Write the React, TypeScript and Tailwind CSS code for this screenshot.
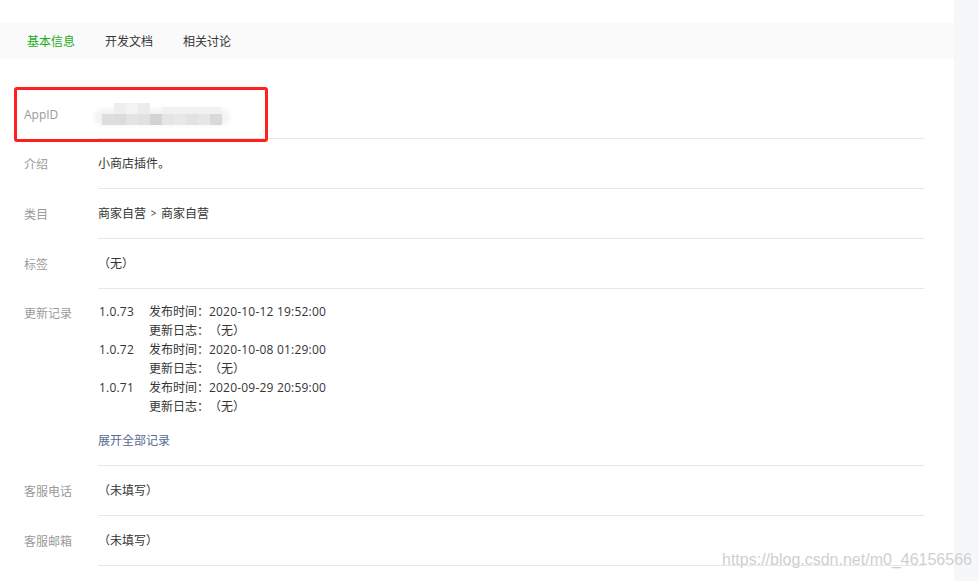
const FONT = "font-['Open_Sans','Noto_Sans_CJK_SC',sans-serif]";

const records = [
  { v: '1.0.73', t: '2020-10-12 19:52:00' },
  { v: '1.0.72', t: '2020-10-08 01:29:00' },
  { v: '1.0.71', t: '2020-09-29 20:59:00' },
];

function Mosaic() {
  // pixelated AppID value
  const bottom = ['#dedede', '#dcdcdc', '#e4e4e4', '#e1e1e1', '#d3d3d3', '#e5e5e5', '#e8e8e8', '#e2e2e2', '#e6e6e6', '#d9d9d9'];
  return (
    <svg width="142" height="28" viewBox="0 0 142 28" className="-ml-[6px] block">
      <defs>
        <filter id="soft" x="-20%" y="-50%" width="140%" height="200%">
          <feGaussianBlur stdDeviation="2" />
        </filter>
      </defs>
      <rect x="2" y="9" width="136" height="16" rx="8" fill="#f3f3f3" filter="url(#soft)" />
      <rect x="22" y="3" width="12" height="11" fill="#eeeeee" />
      <rect x="34" y="3" width="12" height="11" fill="#f3f3f3" />
      <rect x="46" y="3" width="12" height="11" fill="#ececec" />
      <rect x="70" y="7" width="60" height="7" fill="#f1f1f1" />
      {bottom.map((c, i) => (
        <rect key={i} x={10 + i * 12} y="14" width="12" height="11" fill={c} />
      ))}
    </svg>
  );
}

function Row({ label, children }: { label: string; children: React.ReactNode }) {
  return (
    <div className="flex">
      <div className="w-[74px] h-[50px] flex items-center text-[#9a9a9a]">{label}</div>
      <div className="flex-1 h-[50px] flex items-center border-b border-[#e7e7e7]">{children}</div>
    </div>
  );
}

export default function App() {
  return (
    <div className={`relative w-[979px] h-[581px] overflow-hidden bg-white flex text-[12px] leading-[19px] text-[#353535] ${FONT}`}>
      <div className="flex-1 pt-[23px]">
        <div className="h-[36px] bg-[#fafafa] flex items-center pl-[27px] gap-[30px]">
          <span className="text-[#1aad19]">基本信息</span>
          <span>开发文档</span>
          <span>相关讨论</span>
        </div>

        <div className="pt-[30px] pl-[24px] pr-[30px]">
          <Row label="AppID">
            <Mosaic />
          </Row>
          <Row label="介绍">小商店插件。</Row>
          <Row label="类目">
            商家自营
            <span className="inline-block w-[15px] text-center text-[10px]">&gt;</span>
            商家自营
          </Row>
          <Row label="标签">（无）</Row>

          <div className="flex">
            <div className="w-[74px] pt-[15px] text-[#9a9a9a]">更新记录</div>
            <div className="flex-1 pt-[13px] pb-[15px] border-b border-[#e7e7e7]">
              {records.map((r) => (
                <div key={r.v}>
                  <div className="flex">
                    <span className="w-[51px] pl-[1px] tracking-[0.2px]">{r.v}</span>
                    <span className="w-[60px]">发布时间：</span>
                    <span className="tracking-[0.2px]">{r.t}</span>
                  </div>
                  <div className="flex">
                    <span className="w-[51px]" />
                    <span className="w-[60px]">更新日志：</span>
                    <span>（无）</span>
                  </div>
                </div>
              ))}
              <a href="#" className="block mt-[15px] text-[#576b95]">展开全部记录</a>
            </div>
          </div>

          <Row label="客服电话">（未填写）</Row>
          <Row label="客服邮箱">（未填写）</Row>
        </div>
      </div>

      <div className="w-[25px] bg-[#f6f7f9]" />

      {/* annotation box */}
      <div className="absolute left-[14px] top-[87px] w-[254px] h-[55px] border-[3px] border-[#ff1f1f] rounded-[3px]" />

      {/* watermark */}
      <div className="absolute left-[722px] top-[550px] text-[16px] leading-[20px] text-[#cfcfcf] font-['Liberation_Sans',sans-serif] [text-shadow:0_0_1px_#ffffff]">
        https://blog.csdn.net/m0_46156566
      </div>
    </div>
  );
}
